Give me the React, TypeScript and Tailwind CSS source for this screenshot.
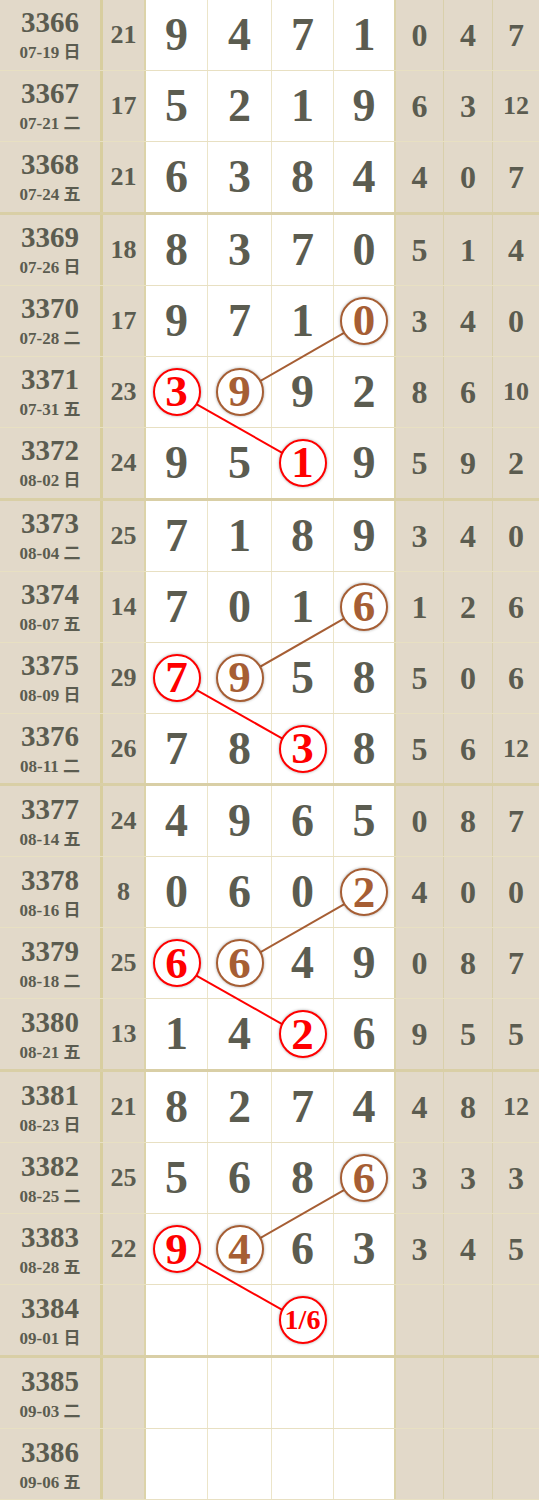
import React from "react";

type Row = {
  issue: string;
  date: string;
  sum?: string;
  nums?: string[];
  tail?: string[];
};

const rows: Row[] = [
  { issue: "3366", date: "07-19 日", sum: "21", nums: ["9", "4", "7", "1"], tail: ["0", "4", "7"] },
  { issue: "3367", date: "07-21 二", sum: "17", nums: ["5", "2", "1", "9"], tail: ["6", "3", "12"] },
  { issue: "3368", date: "07-24 五", sum: "21", nums: ["6", "3", "8", "4"], tail: ["4", "0", "7"] },
  { issue: "3369", date: "07-26 日", sum: "18", nums: ["8", "3", "7", "0"], tail: ["5", "1", "4"] },
  { issue: "3370", date: "07-28 二", sum: "17", nums: ["9", "7", "1", "0"], tail: ["3", "4", "0"] },
  { issue: "3371", date: "07-31 五", sum: "23", nums: ["3", "9", "9", "2"], tail: ["8", "6", "10"] },
  { issue: "3372", date: "08-02 日", sum: "24", nums: ["9", "5", "1", "9"], tail: ["5", "9", "2"] },
  { issue: "3373", date: "08-04 二", sum: "25", nums: ["7", "1", "8", "9"], tail: ["3", "4", "0"] },
  { issue: "3374", date: "08-07 五", sum: "14", nums: ["7", "0", "1", "6"], tail: ["1", "2", "6"] },
  { issue: "3375", date: "08-09 日", sum: "29", nums: ["7", "9", "5", "8"], tail: ["5", "0", "6"] },
  { issue: "3376", date: "08-11 二", sum: "26", nums: ["7", "8", "3", "8"], tail: ["5", "6", "12"] },
  { issue: "3377", date: "08-14 五", sum: "24", nums: ["4", "9", "6", "5"], tail: ["0", "8", "7"] },
  { issue: "3378", date: "08-16 日", sum: "8", nums: ["0", "6", "0", "2"], tail: ["4", "0", "0"] },
  { issue: "3379", date: "08-18 二", sum: "25", nums: ["6", "6", "4", "9"], tail: ["0", "8", "7"] },
  { issue: "3380", date: "08-21 五", sum: "13", nums: ["1", "4", "2", "6"], tail: ["9", "5", "5"] },
  { issue: "3381", date: "08-23 日", sum: "21", nums: ["8", "2", "7", "4"], tail: ["4", "8", "12"] },
  { issue: "3382", date: "08-25 二", sum: "25", nums: ["5", "6", "8", "6"], tail: ["3", "3", "3"] },
  { issue: "3383", date: "08-28 五", sum: "22", nums: ["9", "4", "6", "3"], tail: ["3", "4", "5"] },
  { issue: "3384", date: "09-01 日", nums: ["", "", "1/6", ""] },
  { issue: "3385", date: "09-03 二" },
  { issue: "3386", date: "09-06 五" },
];

// circled cells: [row, col, colour]
const red = "#ff0000";
const brown = "#a65e34";
const marks: [number, number, string][] = [
  [4, 3, brown], [5, 1, brown], [5, 0, red], [6, 2, red],
  [8, 3, brown], [9, 1, brown], [9, 0, red], [10, 2, red],
  [12, 3, brown], [13, 1, brown], [13, 0, red], [14, 2, red],
  [16, 3, brown], [17, 1, brown], [17, 0, red], [18, 2, red],
];

const links: [number, number, number, number, string][] = [
  [4, 3, 5, 1, brown], [5, 0, 6, 2, red],
  [8, 3, 9, 1, brown], [9, 0, 10, 2, red],
  [12, 3, 13, 1, brown], [13, 0, 14, 2, red],
  [16, 3, 17, 1, brown], [17, 0, 18, 2, red],
];

const whiteW = ["w-[62px]", "w-[64px]", "w-[62px]", "w-[62px]"];
const colX = [176.5, 239.5, 302.5, 364];
const rowH = 1500 / 21;
const rowY = (i: number) => (i + 0.5) * rowH;

function markOf(r: number, c: number) {
  const m = marks.find((x) => x[0] === r && x[1] === c);
  return m ? m[2] : null;
}

export default function App() {
  return (
    <div className="relative w-[539px] h-[1500px] flex flex-col bg-white font-['Liberation_Serif','Noto_Sans_CJK_SC',serif] font-bold text-[#5b5c50]">
      {rows.map((row, i) => {
        const thick = i % 4 === 2;
        return (
          <div
            key={row.issue}
            className={`flex flex-1 min-h-0 ${
              thick ? "border-b-[3px] border-[#d9cfa6]" : "border-b border-[#e8e0c2]"
            }`}
          >
            <div className="w-[103px] shrink-0 bg-[#e2d9c9] border-r-[3px] border-[#d8ce9f] flex flex-col items-center justify-center">
              <span className="text-[29px] leading-none">{row.issue}</span>
              <span className="text-[17px] leading-none mt-[7px]">{row.date}</span>
            </div>
            <div className="w-[43px] shrink-0 bg-[#e2d9c9] border-r-2 border-[#dcd3a9] flex items-center justify-center text-[26px] leading-none">
              {row.sum ?? ""}
            </div>
            {[0, 1, 2, 3].map((c) => {
              const v = row.nums ? row.nums[c] : "";
              const color = markOf(i, c);
              return (
                <div
                  key={c}
                  className={`${whiteW[c]} shrink-0 bg-white flex items-center justify-center ${
                    c === 3 ? "border-r-2 border-[#dcd3a9]" : "border-r border-[#ece5c9]"
                  }`}
                >
                  {color ? (
                    <span
                      className="relative z-10 w-[48px] h-[48px] rounded-full border-2 bg-white flex items-center justify-center leading-none shadow-[0_0_3px_rgba(0,0,0,0.35)]"
                      style={{ borderColor: color, color }}
                    >
                      <span className={v.length > 1 ? "text-[28px]" : "text-[45px]"}>{v}</span>
                    </span>
                  ) : (
                    <span className="text-[46px] leading-none">{v}</span>
                  )}
                </div>
              );
            })}
            {[0, 1, 2].map((c) => {
              const v = row.tail ? row.tail[c] : "";
              return (
                <div
                  key={c}
                  className={`bg-[#e2d9c9] flex items-center justify-center leading-none ${
                    c === 0
                      ? "w-[48px] shrink-0 border-r border-[#d9d0ab]"
                      : c === 1
                      ? "w-[49px] shrink-0 border-r border-[#d9d0ab]"
                      : "flex-1"
                  } ${v.length > 1 ? "text-[26px]" : "text-[32px]"}`}
                >
                  {v}
                </div>
              );
            })}
          </div>
        );
      })}
      <svg className="absolute inset-0 z-[5] pointer-events-none" width={539} height={1500}>
        {links.map(([r1, c1, r2, c2, color], k) => (
          <line
            key={k}
            x1={colX[c1]}
            y1={rowY(r1)}
            x2={colX[c2]}
            y2={rowY(r2)}
            stroke={color}
            strokeWidth={2}
          />
        ))}
      </svg>
    </div>
  );
}
